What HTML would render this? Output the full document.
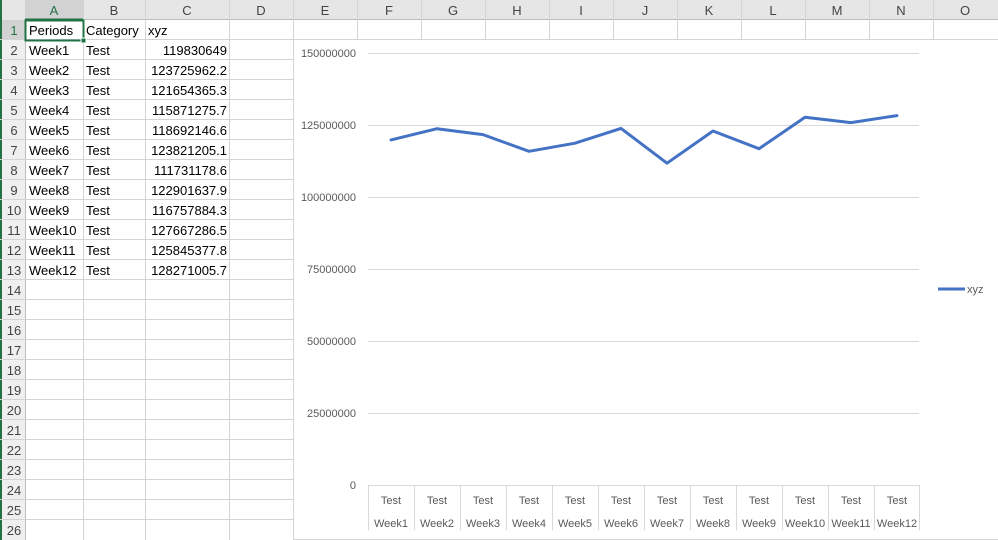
<!DOCTYPE html>
<html><head><meta charset="utf-8"><style>
body{margin:0;width:998px;height:540px;overflow:hidden;background:#fff;font-family:"Liberation Sans",Calibri,sans-serif;position:relative}
.a{position:absolute}
</style></head><body>
<svg class="a" style="left:0;top:0" width="998" height="540" xmlns="http://www.w3.org/2000/svg" font-family="Liberation Sans, sans-serif">
<rect x="0" y="0" width="998" height="20" fill="#e6e6e6"/>
<rect x="0" y="20" width="25" height="520" fill="#efefef"/>
<rect x="25" y="0" width="58" height="20" fill="#d2d2d2"/>
<rect x="0" y="20" width="25" height="20" fill="#d2d2d2"/>
<line x1="25" y1="19.5" x2="998" y2="19.5" stroke="#bdbdbd"/>
<line x1="25.5" y1="20" x2="25.5" y2="540" stroke="#bdbdbd"/>
<line x1="25" y1="19.5" x2="83" y2="19.5" stroke="#217346" stroke-width="2"/>
<line x1="1" y1="0" x2="1" y2="540" stroke="#217346" stroke-width="2"/>
<g stroke="#d4d4d4">
<line x1="83.5" y1="0" x2="83.5" y2="540"/><line x1="145.5" y1="0" x2="145.5" y2="540"/><line x1="229.5" y1="0" x2="229.5" y2="540"/><line x1="293.5" y1="0" x2="293.5" y2="540"/>
<line x1="357.5" y1="0" x2="357.5" y2="40"/><line x1="421.5" y1="0" x2="421.5" y2="40"/><line x1="485.5" y1="0" x2="485.5" y2="40"/><line x1="549.5" y1="0" x2="549.5" y2="40"/><line x1="613.5" y1="0" x2="613.5" y2="40"/><line x1="677.5" y1="0" x2="677.5" y2="40"/><line x1="741.5" y1="0" x2="741.5" y2="40"/><line x1="805.5" y1="0" x2="805.5" y2="40"/><line x1="869.5" y1="0" x2="869.5" y2="40"/><line x1="933.5" y1="0" x2="933.5" y2="40"/>
<line x1="0" y1="39.5" x2="998" y2="39.5"/>
<line x1="0" y1="59.5" x2="293" y2="59.5"/><line x1="0" y1="79.5" x2="293" y2="79.5"/><line x1="0" y1="99.5" x2="293" y2="99.5"/><line x1="0" y1="119.5" x2="293" y2="119.5"/><line x1="0" y1="139.5" x2="293" y2="139.5"/><line x1="0" y1="159.5" x2="293" y2="159.5"/><line x1="0" y1="179.5" x2="293" y2="179.5"/><line x1="0" y1="199.5" x2="293" y2="199.5"/><line x1="0" y1="219.5" x2="293" y2="219.5"/><line x1="0" y1="239.5" x2="293" y2="239.5"/><line x1="0" y1="259.5" x2="293" y2="259.5"/><line x1="0" y1="279.5" x2="293" y2="279.5"/><line x1="0" y1="299.5" x2="293" y2="299.5"/><line x1="0" y1="319.5" x2="293" y2="319.5"/><line x1="0" y1="339.5" x2="293" y2="339.5"/><line x1="0" y1="359.5" x2="293" y2="359.5"/><line x1="0" y1="379.5" x2="293" y2="379.5"/><line x1="0" y1="399.5" x2="293" y2="399.5"/><line x1="0" y1="419.5" x2="293" y2="419.5"/><line x1="0" y1="439.5" x2="293" y2="439.5"/><line x1="0" y1="459.5" x2="293" y2="459.5"/><line x1="0" y1="479.5" x2="293" y2="479.5"/><line x1="0" y1="499.5" x2="293" y2="499.5"/><line x1="0" y1="519.5" x2="293" y2="519.5"/>
</g>
<g font-size="13" fill="#444" text-anchor="middle">
<text x="54" y="15" fill="#217346">A</text><text x="114" y="15">B</text><text x="187" y="15">C</text><text x="261" y="15">D</text><text x="325" y="15">E</text><text x="389" y="15">F</text><text x="453" y="15">G</text><text x="517" y="15">H</text><text x="581" y="15">I</text><text x="645" y="15">J</text><text x="709" y="15">K</text><text x="773" y="15">L</text><text x="837" y="15">M</text><text x="901" y="15">N</text><text x="965" y="15">O</text>
</g>
<g font-size="13" fill="#444" text-anchor="middle">
<text x="14" y="35" fill="#217346">1</text><text x="14" y="55">2</text><text x="14" y="75">3</text><text x="14" y="95">4</text><text x="14" y="115">5</text><text x="14" y="135">6</text><text x="14" y="155">7</text><text x="14" y="175">8</text><text x="14" y="195">9</text><text x="14" y="215">10</text><text x="14" y="235">11</text><text x="14" y="255">12</text><text x="14" y="275">13</text><text x="14" y="295">14</text><text x="14" y="315">15</text><text x="14" y="335">16</text><text x="14" y="355">17</text><text x="14" y="375">18</text><text x="14" y="395">19</text><text x="14" y="415">20</text><text x="14" y="435">21</text><text x="14" y="455">22</text><text x="14" y="475">23</text><text x="14" y="495">24</text><text x="14" y="515">25</text><text x="14" y="535">26</text>
</g>
<g font-size="13" fill="#000">
<text x="29" y="35">Periods</text><text x="86" y="35">Category</text><text x="148" y="35">xyz</text>
<text x="29" y="55">Week1</text><text x="29" y="75">Week2</text><text x="29" y="95">Week3</text><text x="29" y="115">Week4</text><text x="29" y="135">Week5</text><text x="29" y="155">Week6</text><text x="29" y="175">Week7</text><text x="29" y="195">Week8</text><text x="29" y="215">Week9</text><text x="29" y="235">Week10</text><text x="29" y="255">Week11</text><text x="29" y="275">Week12</text>
<text x="86" y="55">Test</text><text x="86" y="75">Test</text><text x="86" y="95">Test</text><text x="86" y="115">Test</text><text x="86" y="135">Test</text><text x="86" y="155">Test</text><text x="86" y="175">Test</text><text x="86" y="195">Test</text><text x="86" y="215">Test</text><text x="86" y="235">Test</text><text x="86" y="255">Test</text><text x="86" y="275">Test</text>
</g>
<g font-size="13" fill="#000" text-anchor="end">
<text x="227" y="55">119830649</text><text x="227" y="75">123725962.2</text><text x="227" y="95">121654365.3</text><text x="227" y="115">115871275.7</text><text x="227" y="135">118692146.6</text><text x="227" y="155">123821205.1</text><text x="227" y="175">111731178.6</text><text x="227" y="195">122901637.9</text><text x="227" y="215">116757884.3</text><text x="227" y="235">127667286.5</text><text x="227" y="255">125845377.8</text><text x="227" y="275">128271005.7</text>
</g>
<rect x="25.5" y="20.5" width="58" height="20" fill="none" stroke="#217346" stroke-width="2"/>
<rect x="81" y="38" width="5" height="5" fill="#217346" stroke="#fff"/>
<rect x="294" y="40" width="704" height="500" fill="#fff"/>
<line x1="294" y1="539.5" x2="998" y2="539.5" stroke="#d9d9d9"/>
<g stroke="#d9d9d9">
<line x1="368" y1="53.5" x2="919" y2="53.5"/><line x1="368" y1="125.5" x2="919" y2="125.5"/><line x1="368" y1="197.5" x2="919" y2="197.5"/><line x1="368" y1="269.5" x2="919" y2="269.5"/><line x1="368" y1="341.5" x2="919" y2="341.5"/><line x1="368" y1="413.5" x2="919" y2="413.5"/><line x1="368" y1="485.5" x2="919" y2="485.5"/>
<line x1="368.5" y1="485" x2="368.5" y2="530"/><line x1="414.5" y1="485" x2="414.5" y2="530"/><line x1="460.5" y1="485" x2="460.5" y2="530"/><line x1="506.5" y1="485" x2="506.5" y2="530"/><line x1="552.5" y1="485" x2="552.5" y2="530"/><line x1="598.5" y1="485" x2="598.5" y2="530"/><line x1="644.5" y1="485" x2="644.5" y2="530"/><line x1="690.5" y1="485" x2="690.5" y2="530"/><line x1="736.5" y1="485" x2="736.5" y2="530"/><line x1="782.5" y1="485" x2="782.5" y2="530"/><line x1="828.5" y1="485" x2="828.5" y2="530"/><line x1="874.5" y1="485" x2="874.5" y2="530"/><line x1="919.5" y1="485" x2="919.5" y2="530"/>
</g>
<g font-size="11" fill="#595959" text-anchor="end">
<text x="356" y="57">150000000</text><text x="356" y="129">125000000</text><text x="356" y="201">100000000</text><text x="356" y="273">75000000</text><text x="356" y="345">50000000</text><text x="356" y="417">25000000</text><text x="356" y="489">0</text>
</g>
<g font-size="11" fill="#595959" text-anchor="middle">
<text x="391" y="504">Test</text><text x="437" y="504">Test</text><text x="483" y="504">Test</text><text x="529" y="504">Test</text><text x="575" y="504">Test</text><text x="621" y="504">Test</text><text x="667" y="504">Test</text><text x="713" y="504">Test</text><text x="759" y="504">Test</text><text x="805" y="504">Test</text><text x="851" y="504">Test</text><text x="897" y="504">Test</text>
<text x="391" y="527">Week1</text><text x="437" y="527">Week2</text><text x="483" y="527">Week3</text><text x="529" y="527">Week4</text><text x="575" y="527">Week5</text><text x="621" y="527">Week6</text><text x="667" y="527">Week7</text><text x="713" y="527">Week8</text><text x="759" y="527">Week9</text><text x="805" y="527">Week10</text><text x="851" y="527">Week11</text><text x="897" y="527">Week12</text>
</g>
<polyline fill="none" stroke="#4472c4" stroke-width="3" stroke-linejoin="round" stroke-linecap="round" points="391,139.9 437,128.7 483,134.6 529,151.3 575,143.2 621,128.4 667,163.2 713,131 759,148.7 805,117.3 851,122.6 897,115.6"/>
<line x1="938" y1="289" x2="965" y2="289" stroke="#4472c4" stroke-width="3"/>
<text x="967" y="293" font-size="11" fill="#595959">xyz</text>
</svg>
</body></html>
